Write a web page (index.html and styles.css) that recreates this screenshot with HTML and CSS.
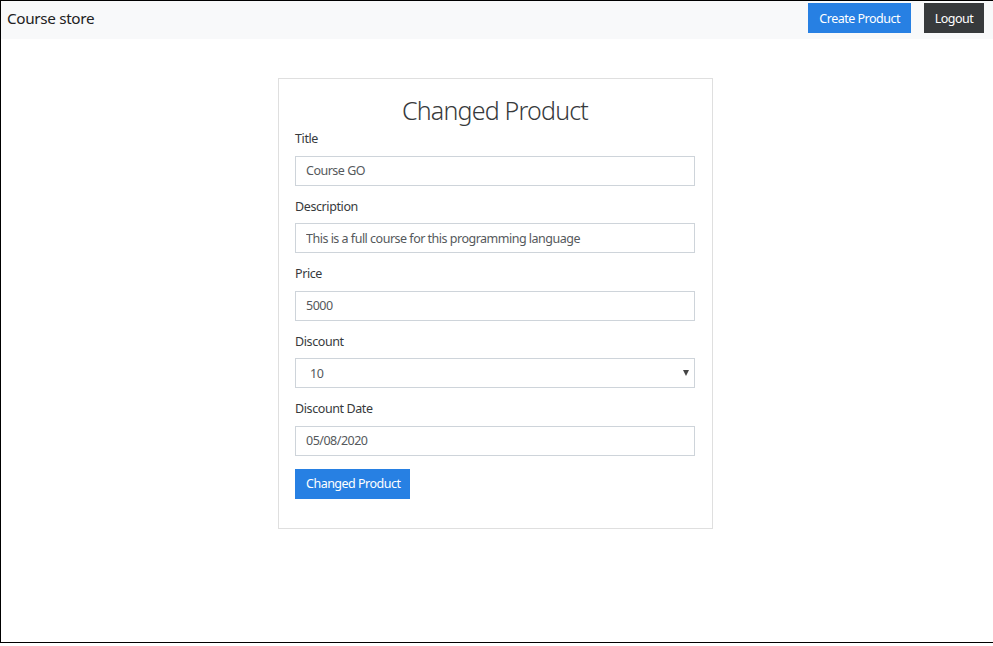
FILE: index.html
```html
<!DOCTYPE html>
<html lang="en">
<head>
<meta charset="utf-8">
<title>Course store</title>
<link rel="stylesheet" href="styles.css">
</head>
<body>
<div class="frame">
  <nav class="navbar">
    <a class="brand" href="#">Course store</a>
    <div class="nav-actions">
      <button class="btn btn-primary" type="button">Create Product</button>
      <button class="btn btn-dark logout" type="button">Logout</button>
    </div>
  </nav>
  <main class="content">
    <div class="card">
      <h1 class="card-title">Changed Product</h1>
      <form class="form">
        <div class="form-group">
          <label class="label">Title</label>
          <input class="control" type="text" value="Course GO">
        </div>
        <div class="form-group">
          <label class="label">Description</label>
          <input class="control" type="text" value="This is a full course for this programming language">
        </div>
        <div class="form-group">
          <label class="label">Price</label>
          <input class="control" type="text" value="5000">
        </div>
        <div class="form-group">
          <label class="label">Discount</label>
          <div class="select-wrap">
            <select class="control select">
              <option>10</option>
            </select>
          </div>
        </div>
        <div class="form-group">
          <label class="label">Discount Date</label>
          <input class="control date" type="text" value="05/08/2020">
        </div>
        <button class="btn btn-primary submit" type="button">Changed Product</button>
      </form>
    </div>
  </main>
</div>
</body>
</html>
```

FILE: styles.css
```css
* { box-sizing: border-box; }

html, body {
  margin: 0;
  padding: 0;
  background: #fff;
}

body {
  font-family: "Noto Sans", "Open Sans", sans-serif;
  color: #373a3c;
}

.frame {
  width: 993px;
  height: 643px;
  border-left: 1px solid #000;
  border-top: 1px solid #000;
  border-bottom: 1px solid #000;
  overflow: hidden;
}

.navbar {
  height: 38px;
  background: #f8f9fa;
  display: flex;
  justify-content: space-between;
  align-items: flex-start;
  padding: 2px 9px 0 6px;
}

.brand {
  font-size: 15.3px;
  letter-spacing: -0.35px;
  line-height: 31px;
  color: #222;
  text-decoration: none;
}

.nav-actions {
  display: flex;
  gap: 13px;
}

.btn {
  font-family: inherit;
  font-size: 12.5px;
  letter-spacing: -0.5px;
  height: 30px;
  border: 0;
  border-radius: 0;
  padding: 0 11px;
  color: #fff;
  white-space: nowrap;
  cursor: pointer;
}

.btn-primary { background: #2780e3; }
.btn-dark { background: #373a3c; }

.logout {
  width: 60px;
  padding: 0;
}

.content {
  display: flex;
  justify-content: center;
  padding-top: 39px;
  padding-right: 3px;
}

.card {
  width: 435px;
  border: 1px solid #dfdfdf;
  padding: 16px 17px 29px 16px;
}

.card-title {
  margin: 0 0 2px;
  text-align: center;
  font-size: 25px;
  letter-spacing: -0.8px;
  font-weight: 300;
  line-height: 31px;
  color: #373a3c;
}

.form-group {
  margin-bottom: 10px;
}

.label {
  display: block;
  font-size: 12.5px;
  letter-spacing: -0.4px;
  line-height: 20.5px;
  padding-top: 1px;
  margin-bottom: 6px;
}

.control {
  display: block;
  width: 400px;
  height: 30px;
  border: 1px solid #ced4da;
  border-radius: 0;
  background: #fff;
  padding: 0 10px;
  font-family: inherit;
  font-size: 12.5px;
  letter-spacing: -0.5px;
  color: #55595c;
}

.select-wrap {
  position: relative;
  width: 400px;
}

.select {
  appearance: none;
  -webkit-appearance: none;
  padding-left: 14px;
}

.select-wrap::after {
  content: "";
  position: absolute;
  right: 6px;
  top: 12px;
  border-left: 3.5px solid transparent;
  border-right: 3.5px solid transparent;
  border-top: 6px solid #444;
  pointer-events: none;
}

.submit {
  margin-top: 3px;
  width: 115px;
}
```
